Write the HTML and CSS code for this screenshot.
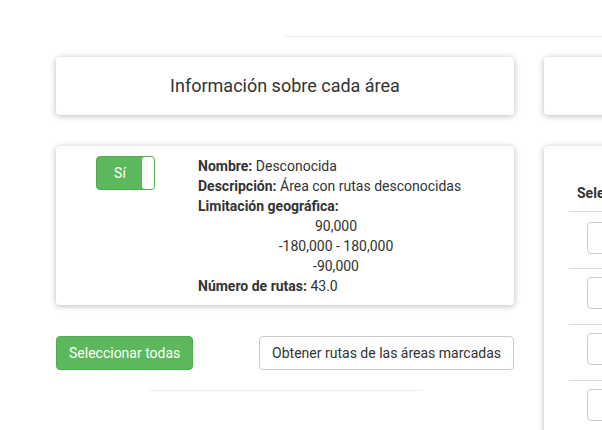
FILE: index.html
```html
<!DOCTYPE html>
<html lang="es">
<head>
<meta charset="utf-8">
<link rel="stylesheet" href="styles.css">
</head>
<body>
<div class="page">
  <div class="topline"></div>
  <div class="row">
    <div class="col">
      <div class="card title-card">Información sobre cada área</div>
      <div class="card info-card">
        <div class="toggle-col">
          <div class="toggle">
            <span class="toggle-on">Sí</span>
            <span class="toggle-handle"></span>
          </div>
        </div>
        <div class="text-col">
          <div><b>Nombre:</b> Desconocida</div>
          <div><b>Descripción:</b> Área con rutas desconocidas</div>
          <div><b>Limitación geográfica:</b></div>
          <div class="center">90,000</div>
          <div class="center">-180,000 - 180,000</div>
          <div class="center">-90,000</div>
          <div><b>Número de rutas:</b> 43.0</div>
        </div>
      </div>
      <div class="actions">
        <button class="btn btn-success">Seleccionar todas</button>
        <button class="btn btn-default">Obtener rutas de las áreas marcadas</button>
      </div>
      <div class="bottomline"></div>
    </div>
    <div class="col">
      <div class="card title-card"></div>
      <div class="card table-card">
        <table class="tbl">
          <thead><tr><th>Seleccionar</th></tr></thead>
          <tbody>
            <tr><td><span class="box"></span></td></tr>
            <tr><td><span class="box"></span></td></tr>
            <tr><td><span class="box"></span></td></tr>
            <tr><td><span class="box"></span></td></tr>
          </tbody>
        </table>
      </div>
    </div>
  </div>
</div>
</body>
</html>
```

FILE: styles.css
```css
html, body {
  margin: 0;
  padding: 0;
  background: #fff;
  overflow: hidden;
}
body {
  font-family: Roboto, "Liberation Sans", Arial, sans-serif;
  font-size: 14px;
  line-height: 20px;
  color: #333;
}
.page {
  width: 602px;
  height: 430px;
  overflow: hidden;
}
.topline {
  margin: 36px 0 0 285px;
  border-top: 1px solid #eee;
  height: 0;
}
.row {
  display: flex;
  gap: 30px;
  padding-left: 56px;
}
.col {
  flex: 0 0 458px;
  width: 458px;
}
.card {
  background: #fff;
  border-radius: 4px;
  box-shadow: 0 1px 6px rgba(0, 0, 0, 0.28);
}
.title-card {
  margin-top: 20px;
  height: 58px;
  display: flex;
  align-items: center;
  justify-content: center;
  font-size: 18px;
}
.info-card {
  margin-top: 31px;
  height: 159px;
  box-sizing: border-box;
  padding: 10px 0 0;
  display: flex;
}
.toggle-col {
  width: 142px;
  padding-left: 40px;
  box-sizing: border-box;
  margin-top: 0;
}
.toggle {
  width: 59px;
  height: 34px;
  box-sizing: border-box;
  border: 1px solid #4cae4c;
  border-radius: 4px;
  background: #5cb85c;
  display: flex;
  overflow: hidden;
}
.toggle-on {
  flex: 1;
  color: #fff;
  display: flex;
  align-items: center;
  justify-content: center;
  padding-left: 1px;
}
.toggle-handle {
  width: 12px;
  background: #fff;
  border-radius: 3px 0 0 3px;
}
.text-col {
  width: 276px;
}
.center {
  text-align: center;
}
.actions {
  margin-top: 31px;
  display: flex;
  justify-content: space-between;
}
.btn {
  font-family: inherit;
  font-size: 14px;
  line-height: 20px;
  height: 34px;
  padding: 6px 12px;
  border-radius: 4px;
  border: 1px solid transparent;
  box-sizing: border-box;
  cursor: pointer;
  white-space: nowrap;
}
.btn-success {
  background: #5cb85c;
  border-color: #4cae4c;
  color: #fff;
}
.btn-default {
  background: #fff;
  border-color: #ccc;
  color: #333;
}
.bottomline {
  width: 275px;
  margin: 20px auto 0;
  border-top: 1px solid #eee;
}
.table-card {
  margin-top: 31px;
  height: 320px;
  padding: 29px 25px 0;
  box-sizing: border-box;
}
.tbl {
  border-collapse: collapse;
  width: 400px;
}
.tbl th {
  text-align: left;
  font-weight: bold;
  padding: 8px 8px 8px;
  border-bottom: 1px solid #ddd;
}
.tbl td {
  padding: 8px 18px 15px;
  border-top: 1px solid #ddd;
  height: 32px;
  line-height: 0;
}
.tbl thead + tbody tr:first-child td {
  border-top: 0;
  padding-top: 10px;
  padding-bottom: 14px;
}
.box {
  display: inline-block;
  width: 60px;
  height: 32px;
  box-sizing: border-box;
  border: 1px solid #ccc;
  border-radius: 4px;
}
```
